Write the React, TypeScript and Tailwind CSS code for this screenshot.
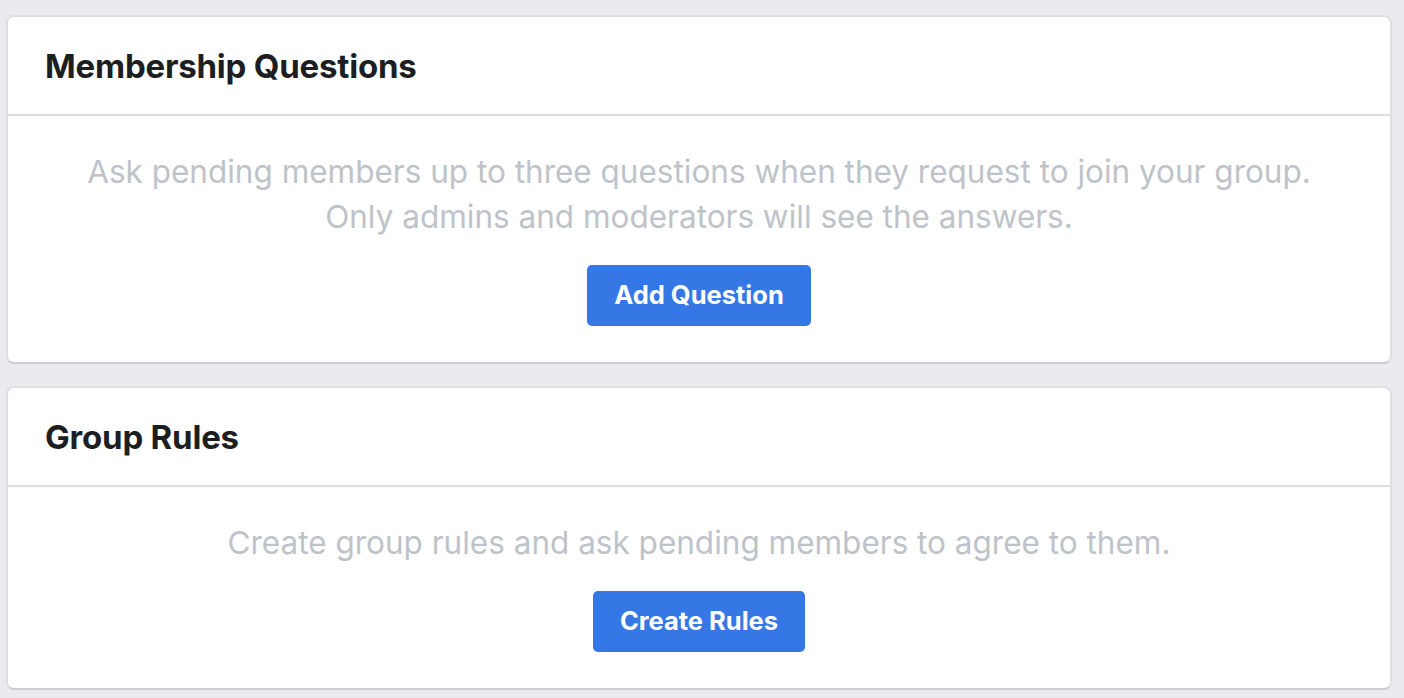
export default function App() {
    return (
        <div
            className="min-h-[698px] w-full bg-[#e9ebee] pt-[15px] pl-[6px] pr-[12px]"
            style={{ fontFamily: "Inter, 'Liberation Sans', sans-serif" }}
        >
            <div className="flex flex-col gap-[22px]">
                <Card
                    title="Membership Questions"
                    lines={[
                        "Ask pending members up to three questions when they request to join your group.",
                        "Only admins and moderators will see the answers."
                    ]}
                    action="Add Question"
                />
                <Card
                    title="Group Rules"
                    lines={["Create group rules and ask pending members to agree to them."]}
                    action="Create Rules"
                />
            </div>
        </div>
    );
}

interface CardProps {
    title: string;
    lines: string[];
    action: string;
}

function Card({ title, lines, action }: CardProps) {
    return (
        <div className="rounded-[8px] border-2 border-[#dddfe2] border-b-[#c9ccd1] bg-white">
            <div className="flex h-[99px] items-center border-b-2 border-[#dadde1] px-[37px] pt-[2px]">
                <h2 className="text-[33px] font-bold tracking-[-0.2px] text-[#1c1e21]">{title}</h2>
            </div>
            <div className="flex flex-col items-center pt-[33px] pb-[36px]">
                <p className="text-center text-[31.5px] leading-[45px] text-[#bec3c9]">
                    {lines.map((line, i) => (
                        <span key={i} className="block">{line}</span>
                    ))}
                </p>
                <button className="mt-[26px] h-[61px] rounded-[5px] bg-[#3578e5] px-[27px] text-[25.5px] font-bold text-white">
                    {action}
                </button>
            </div>
        </div>
    );
}
